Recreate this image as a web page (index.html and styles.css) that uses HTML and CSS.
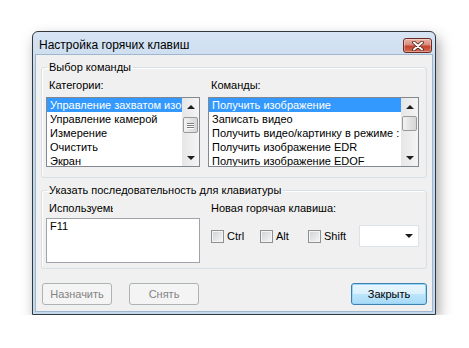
FILE: index.html
```html
<!DOCTYPE html>
<html lang="ru">
<head>
  <meta charset="UTF-8">
  <meta name="viewport" content="width=device-width, initial-scale=1.0">
  <title>Настройка горячих клавиш</title>
  <link rel="stylesheet" href="styles.css">
</head>
<body>
  <div class="window">
    <!-- Title bar -->
    <div class="titlebar">
      <span class="title">Настройка горячих клавиш</span>
      <button class="close-btn" title="Закрыть">
        <svg width="12" height="10" viewBox="0 0 12 10">
          <path d="M2 1.5 L10 8.5 M10 1.5 L2 8.5" stroke="#4a1e18" stroke-width="3.6" stroke-linecap="round" fill="none"/>
          <path d="M2 1.5 L10 8.5 M10 1.5 L2 8.5" stroke="#ffffff" stroke-width="2" stroke-linecap="round" fill="none"/>
        </svg>
      </button>
    </div>

    <div class="client">
      <!-- Command selection -->
      <fieldset class="group group-select">
        <legend>Выбор команды</legend>
        <div class="columns">
          <div class="col">
            <div class="field-label">Категории:</div>
            <div class="listbox list-left">
              <ul class="list-items">
                <li class="selected">Управление захватом изображения</li>
                <li>Управление камерой</li>
                <li>Измерение</li>
                <li>Очистить</li>
                <li>Экран</li>
              </ul>
              <div class="scrollbar">
                <div class="arrow arrow-up"></div>
                <div class="track"><div class="thumb thumb-left"><i></i><i></i><i></i></div></div>
                <div class="arrow arrow-down"></div>
              </div>
            </div>
          </div>
          <div class="col">
            <div class="field-label">Команды:</div>
            <div class="listbox list-right">
              <ul class="list-items">
                <li class="selected">Получить изображение</li>
                <li>Записать видео</li>
                <li>Получить видео/картинку в режиме :</li>
                <li>Получить изображение EDR</li>
                <li>Получить изображение EDOF</li>
              </ul>
              <div class="scrollbar">
                <div class="arrow arrow-up"></div>
                <div class="track"><div class="thumb thumb-right"></div></div>
                <div class="arrow arrow-down"></div>
              </div>
            </div>
          </div>
        </div>
      </fieldset>

      <!-- Keyboard sequence -->
      <fieldset class="group group-keys">
        <legend>Указать последовательность для клавиатуры</legend>
        <div class="columns">
          <div class="col">
            <div class="field-label clipped">Используемые</div>
            <div class="textbox">F11</div>
          </div>
          <div class="col">
            <div class="field-label">Новая горячая клавиша:</div>
            <div class="keys-row">
              <label class="check"><span class="box"></span>Ctrl</label>
              <label class="check"><span class="box"></span>Alt</label>
              <label class="check"><span class="box"></span>Shift</label>
              <div class="combo"><span class="combo-arrow"></span></div>
            </div>
          </div>
        </div>
      </fieldset>

      <!-- Buttons -->
      <div class="buttons">
        <button class="btn" disabled>Назначить</button>
        <button class="btn" disabled>Снять</button>
        <button class="btn btn-default">Закрыть</button>
      </div>
    </div>
  </div>
</body>
</html>
```

FILE: styles.css
```css
body {
  margin: 0;
  background: #fff;
  font-family: "Liberation Sans", Arial, sans-serif;
  font-size: 11px;
  color: #000;
}

/* Window frame */
.window {
  margin: 31px 0 0 32px;
  width: 404px;
  height: 284px;
  box-sizing: border-box;
  border: 1px solid #33383d;
  border-radius: 6px 6px 0 0;
  background: linear-gradient(#d6e4f3, #c2d6ec 60px, #c4d8ee);
  padding: 0 3px 3px;
  display: flex;
  flex-direction: column;
  box-shadow: 3px 6px 14px rgba(0, 0, 0, 0.35);
}

.titlebar {
  height: 23px;
  display: flex;
  justify-content: space-between;
  align-items: flex-start;
  padding-left: 3px;
}

.title {
  font-size: 12px;
  line-height: 15px;
  padding-top: 6px;
  color: #000;
}

.close-btn {
  margin-top: 6px;
  width: 29px;
  height: 15px;
  padding: 0;
  border: 1px solid #6b2a22;
  border-radius: 3px;
  background: linear-gradient(#eab3a6, #d98c7b 45%, #c3442e 55%, #d36a53);
  display: flex;
  align-items: center;
  justify-content: center;
  box-shadow: inset 0 0 0 1px rgba(255, 255, 255, 0.35);
}

.client {
  flex: 1;
  background: #f0f0f0;
  padding: 0 5px;
  display: flex;
  flex-direction: column;
  box-shadow: 0 0 0 1px #9fb6cf;
}

/* Group boxes */
.group {
  margin: 6px 0 0;
  padding: 6px 6px 10px 4px;
  border: 1px solid #d5dfe5;
  border-radius: 3px;
  box-shadow: inset 1px 1px 0 #fff;
  min-width: 0;
}

.group legend {
  padding: 0 2px;
  margin-left: 1px;
  line-height: 12px;
}

.group-keys {
  padding-bottom: 5px;
}

.columns {
  display: grid;
  grid-template-columns: 154px 211px;
  column-gap: 8px;
}

.field-label {
  line-height: 13px;
  padding-left: 3px;
  margin-bottom: 5px;
  white-space: nowrap;
}

/* the label is cut by its control in the original dialog */
.field-label.clipped {
  width: 64px;
  overflow: hidden;
  margin-bottom: 3px;
}

/* List boxes */
.listbox {
  height: 70px;
  box-sizing: border-box;
  border: 1px solid #828790;
  background: #fff;
  display: flex;
}

.list-items {
  flex: 1;
  min-width: 0;
  margin: 0;
  padding: 0;
  list-style: none;
  overflow: hidden;
}

.list-items li {
  height: 14px;
  line-height: 14px;
  padding: 0 3px;
  white-space: nowrap;
  overflow: hidden;
}

.list-items li.selected {
  background: #3399ff;
  color: #fff;
}

.scrollbar {
  width: 17px;
  display: flex;
  flex-direction: column;
  background: linear-gradient(to right, #e6e6e6, #f4f4f4);
}

.arrow {
  height: 17px;
  display: flex;
  align-items: center;
  justify-content: center;
}

.arrow::before {
  content: "";
  border-left: 4px solid transparent;
  border-right: 4px solid transparent;
}

.arrow-up::before {
  border-bottom: 4px solid #1f1f1f;
}

.arrow-down::before {
  border-top: 4px solid #1f1f1f;
}

.track {
  flex: 1;
  padding: 0 1px;
}

.thumb {
  height: 16px;
  box-sizing: border-box;
  border: 1px solid #9a9a9a;
  border-radius: 2px;
  background: linear-gradient(to right, #f3f3f3, #e3e3e3 50%, #d6d6d6);
  display: flex;
  flex-direction: column;
  align-items: center;
  justify-content: center;
  gap: 1px;
}

.thumb-left {
  margin-top: 2px;
}

.thumb-right {
  margin-top: 1px;
  height: 15px;
}

.thumb i {
  display: block;
  width: 7px;
  height: 1px;
  background: #7c7c7c;
  box-shadow: 0 1px 0 #fff;
}

/* Keys */
.textbox {
  height: 45px;
  box-sizing: border-box;
  border: 1px solid #a0a4aa;
  background: #fff;
  padding: 1px 3px;
  line-height: 13px;
}

.keys-row {
  margin-top: 10px;
  padding-left: 3px;
  height: 22px;
  display: grid;
  grid-template-columns: 49px 48px 51px 60px;
  align-items: center;
}

.check {
  display: flex;
  align-items: center;
  gap: 3px;
}

.box {
  width: 13px;
  height: 13px;
  box-sizing: border-box;
  border: 1px solid #8e8f8f;
  background: linear-gradient(135deg, #cfd1d4, #f7f7f7);
  box-shadow: inset 0 0 0 1px #f4f4f4;
}

.combo {
  height: 22px;
  box-sizing: border-box;
  border: 1px solid #dde2e8;
  background: #fff;
  display: flex;
  align-items: center;
  justify-content: flex-end;
  padding-right: 5px;
}

.combo-arrow {
  border-left: 4px solid transparent;
  border-right: 4px solid transparent;
  border-top: 4px solid #1a1a1a;
}

/* Buttons */
.buttons {
  margin-top: 14px;
  padding-left: 1px;
  display: flex;
  gap: 17px;
}

.btn {
  width: 70px;
  height: 22px;
  border: 1px solid #adb2b5;
  border-radius: 3px;
  background: #f4f4f4;
  font-family: inherit;
  font-size: 11px;
  color: #838383;
  padding: 0;
}

.btn-default {
  margin-left: auto;
  width: 76px;
  border-color: #3c7fb1;
  color: #000;
  background: linear-gradient(#eaf6fd, #d9f0fc 50%, #bee6fd 50%, #a7d9f5);
  box-shadow: inset 0 0 0 1px #9ad7f7;
}
```
